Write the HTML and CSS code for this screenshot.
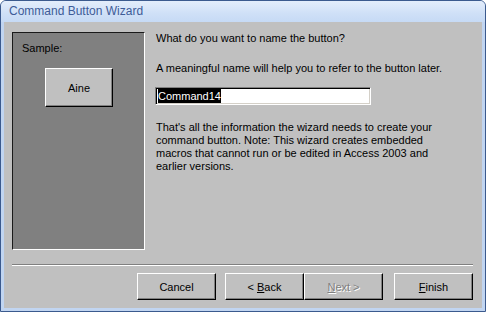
FILE: index.html
```html
<!DOCTYPE html>
<html lang="en">
<head>
    <meta charset="UTF-8">
    <title>Command Button Wizard</title>
    <link rel="stylesheet" href="styles.css">
</head>
<body>
    <div class="window">
        <div class="titlebar">Command Button Wizard</div>
        <div class="client">
            <div class="main">
                <div class="sample-panel">
                    <div class="sample-label">Sample:</div>
                    <div class="sample-button">Aine</div>
                </div>
                <div class="text-col">
                    <p class="question">What do you want to name the button?</p>
                    <p class="hint">A meaningful name will help you to refer to the button later.</p>
                    <div class="name-input"><span class="selected">Command14</span></div>
                    <p class="info">That's all the information the wizard needs to create your command button. Note: This wizard creates embedded macros that cannot run or be edited in Access 2003 and earlier versions.</p>
                </div>
            </div>
            <div class="separator"></div>
            <div class="buttons">
                <div class="btn"><span>Cancel</span></div>
                <div class="btn btn-back"><span>&lt; <u>B</u>ack</span></div>
                <div class="btn disabled"><span><u>N</u>ext &gt;</span></div>
                <div class="btn btn-finish"><span><u>F</u>inish</span></div>
            </div>
        </div>
    </div>
</body>
</html>
```

FILE: styles.css
```css
body {
    margin: 0;
    font-family: 'Liberation Sans', Arial, sans-serif;
    font-size: 11px;
    color: #000000;
}
.window {
    width: 486px;
    height: 312px;
    box-sizing: border-box;
    background: #c1d5f1;
    border: 1px solid #3b5a8e;
    border-radius: 6px 6px 0 0;
    padding: 0 3px 3px 3px;
    display: flex;
    flex-direction: column;
}
.titlebar {
    height: 21px;
    line-height: 21px;
    font-size: 12px;
    color: #3e5c98;
    background: linear-gradient(#e3edfb, #cfe0f7 60%, #c6daf5);
    border-radius: 5px 5px 0 0;
    margin: 0 -3px;
    padding-left: 8px;
}
.client {
    flex: 1;
    background: #c0c0c0;
    display: flex;
    flex-direction: column;
}
.main {
    display: flex;
    padding: 10px 9px 0 8px;
}
.sample-panel {
    width: 133px;
    height: 218px;
    box-sizing: border-box;
    background: #808080;
    border-top: 1px solid #1a1a1a;
    border-left: 1px solid #1a1a1a;
    border-right: 1px solid #ffffff;
    border-bottom: 1px solid #ffffff;
}
.sample-label {
    margin: 9px 0 0 9px;
    line-height: 13px;
}
.sample-button {
    width: 68px;
    height: 39px;
    margin: 13px 0 0 32px;
    box-sizing: border-box;
    background: #c0c0c0;
    border-top: 1px solid #ffffff;
    border-left: 1px solid #ffffff;
    border-right: 1px solid #000000;
    border-bottom: 1px solid #000000;
    box-shadow: inset -1px -1px 0 #808080;
    display: flex;
    align-items: center;
    justify-content: center;
}
.text-col {
    margin-left: 11px;
    flex: 1;
}
.text-col p {
    margin: 0;
    line-height: 13px;
}
.question {
    margin-bottom: 17px !important;
}
.hint {
    margin-bottom: 12px !important;
}
.name-input {
    width: 216px;
    height: 18px;
    margin-left: -1px;
    box-sizing: border-box;
    background: #ffffff;
    border-top: 1px solid #808080;
    border-left: 1px solid #808080;
    border-right: 1px solid #ffffff;
    border-bottom: 1px solid #ffffff;
    box-shadow: inset 1px 1px 0 #000000, inset -1px -1px 0 #d4d0c8;
    padding: 1px 0 0 2px;
}
.selected {
    display: inline-block;
    background: #000000;
    color: #ffffff;
    line-height: 14px;
}
.info {
    margin-top: 16px !important;
    width: 300px;
}
.separator {
    margin: 14px 9px 0 8px;
    height: 1px;
    background: #808080;
    border-bottom: 1px solid #ffffff;
}
.buttons {
    display: flex;
    justify-content: flex-end;
    padding: 7px 9px 0 0;
}
.btn {
    width: 79px;
    height: 27px;
    box-sizing: border-box;
    background: #c0c0c0;
    border-top: 1px solid #ffffff;
    border-left: 1px solid #ffffff;
    border-right: 1px solid #000000;
    border-bottom: 1px solid #000000;
    box-shadow: inset -1px -1px 0 #808080;
    display: flex;
    align-items: center;
    justify-content: center;
}
.btn-back {
    margin-left: 9px;
}
.btn-finish {
    margin-left: 11px;
}
.disabled {
    color: #808080;
    text-shadow: 1px 1px 0 #ffffff;
}
```
